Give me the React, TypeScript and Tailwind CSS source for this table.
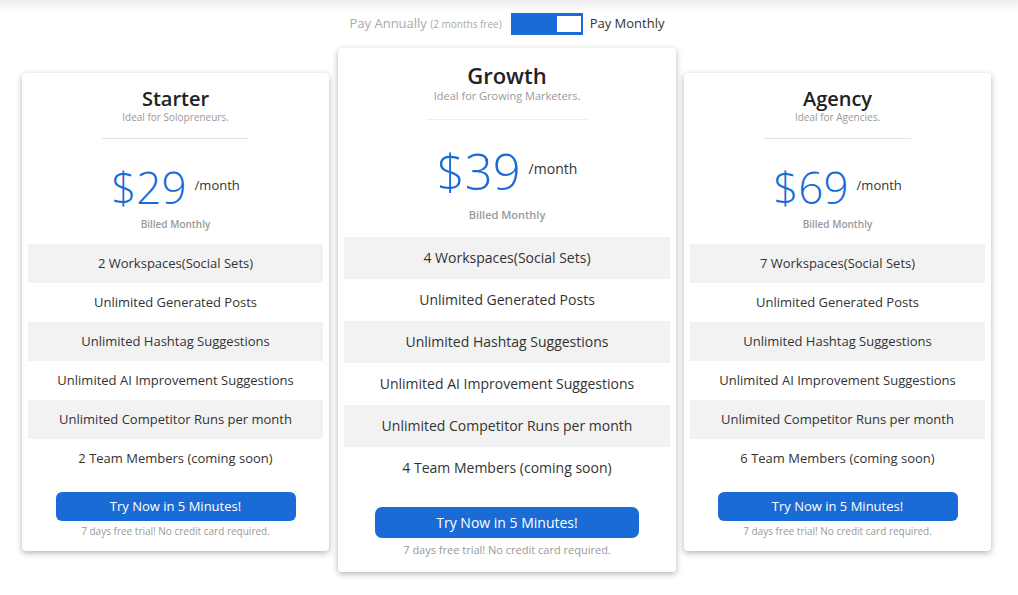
import { Fragment } from 'react';

type Plan = {
  name: string;
  tagline: string;
  price: string;
  features: string[];
  featured?: boolean;
};

const plans: Plan[] = [
  {
    name: 'Starter',
    tagline: 'Ideal for Solopreneurs.',
    price: '$29',
    features: [
      '2 Workspaces(Social Sets)',
      'Unlimited Generated Posts',
      'Unlimited Hashtag Suggestions',
      'Unlimited AI Improvement Suggestions',
      'Unlimited Competitor Runs per month',
      '2 Team Members (coming soon)',
    ],
  },
  {
    name: 'Growth',
    tagline: 'Ideal for Growing Marketers.',
    price: '$39',
    featured: true,
    features: [
      '4 Workspaces(Social Sets)',
      'Unlimited Generated Posts',
      'Unlimited Hashtag Suggestions',
      'Unlimited AI Improvement Suggestions',
      'Unlimited Competitor Runs per month',
      '4 Team Members (coming soon)',
    ],
  },
  {
    name: 'Agency',
    tagline: 'Ideal for Agencies.',
    price: '$69',
    features: [
      '7 Workspaces(Social Sets)',
      'Unlimited Generated Posts',
      'Unlimited Hashtag Suggestions',
      'Unlimited AI Improvement Suggestions',
      'Unlimited Competitor Runs per month',
      '6 Team Members (coming soon)',
    ],
  },
];

function PlanCard({ plan }: { plan: Plan }) {
  const big = !!plan.featured;
  return (
    <div
      className={
        big
          ? 'w-[338px] bg-white rounded-[4px] shadow-[0_2px_6px_rgba(0,0,0,0.3)] px-[6px] pt-[13px] pb-[14px]'
          : 'w-[307px] mt-[25px] bg-white rounded-[4px] shadow-[0_2px_6px_rgba(0,0,0,0.3)] px-[6px] pt-[13px] pb-[12px] self-start'
      }
    >
      <div className="flex flex-col items-center">
        <h2 className={big ? 'text-[22px] leading-[28px] font-semibold text-[#222]' : 'text-[20px] leading-[25px] font-semibold text-[#222]'}>
          {plan.name}
        </h2>
        <p className={big ? 'text-[11px] leading-[14px] text-[#999]' : 'text-[10px] leading-[13px] text-[#999]'}>{plan.tagline}</p>
        <div className={big ? 'w-[161px] h-px bg-[#efefef] mt-[16px]' : 'w-[147px] h-px bg-[#e2e2e2] mt-[14px]'} />
        <div className="flex items-start mt-[26px]">
          <span className={big ? 'text-[49px] leading-[50px] font-light text-[#1a6bd6]' : 'text-[44px] leading-[44px] font-light text-[#1a6bd6]'}>
            {plan.price}
          </span>
          <span className={big ? 'text-[14px] text-[#333] ml-[8px] mt-[12px]' : 'text-[13px] text-[#333] ml-[8px] mt-[11px]'}>/month</span>
        </div>
        <p className={big ? 'text-[11px] font-semibold text-[#999] mt-[11px]' : 'text-[10px] font-semibold text-[#999] mt-[8px]'}>
          Billed Monthly
        </p>
      </div>
      <ul className={big ? 'mt-[13px]' : 'mt-[12px]'}>
        {plan.features.map((f, i) => (
          <li
            key={f}
            className={
              (big ? 'h-[42px] text-[14px] ' : 'h-[39px] text-[13px] ') +
              'flex items-center justify-center text-[#333] ' +
              (i % 2 === 0 ? 'bg-[#f2f2f2]' : 'bg-white')
            }
          >
            {f}
          </li>
        ))}
      </ul>
      <div className="flex flex-col items-center">
        <button
          className={
            big
              ? 'mt-[18px] w-[264px] h-[31px] rounded-[7px] bg-[#1a6bd6] text-white text-[14px] font-medium'
              : 'mt-[14px] w-[240px] h-[29px] rounded-[6px] bg-[#1a6bd6] text-white text-[13px] font-medium'
          }
        >
          Try Now in 5 Minutes!
        </button>
        <p className={big ? 'text-[11px] text-[#999] mt-[4px]' : 'text-[10px] text-[#999] mt-[3px]'}>
          7 days free trial! No credit card required.
        </p>
      </div>
    </div>
  );
}

export default function App() {
  return (
    <div className="min-h-screen bg-white font-['Open_Sans',sans-serif] bg-gradient-to-b from-[#eeeeee] to-white to-[12px] bg-no-repeat">
      <div className="flex items-center justify-center pt-[13px] gap-[7px] pr-[4px]">
        <span className="text-[13px] text-[#aaa]">
          Pay Annually <span className="text-[10px]">(2 months free)</span>
        </span>
        <div className="ml-[2px] w-[72px] h-[22px] bg-[#1a6bd6] flex items-center justify-end pr-[2px]">
          <div className="w-[24px] h-[16px] bg-white" />
        </div>
        <span className="text-[13px] text-[#333]">Pay Monthly</span>
      </div>
      <div className="flex justify-center items-start gap-[8px] mt-[13px] pb-[20px] pr-[5px]">
        {plans.map((p, i) => (
          <Fragment key={p.name}>
            {i === 1 && <div className="w-px shrink-0 -ml-[8px]" />}
            <PlanCard plan={p} />
          </Fragment>
        ))}
      </div>
    </div>
  );
}
